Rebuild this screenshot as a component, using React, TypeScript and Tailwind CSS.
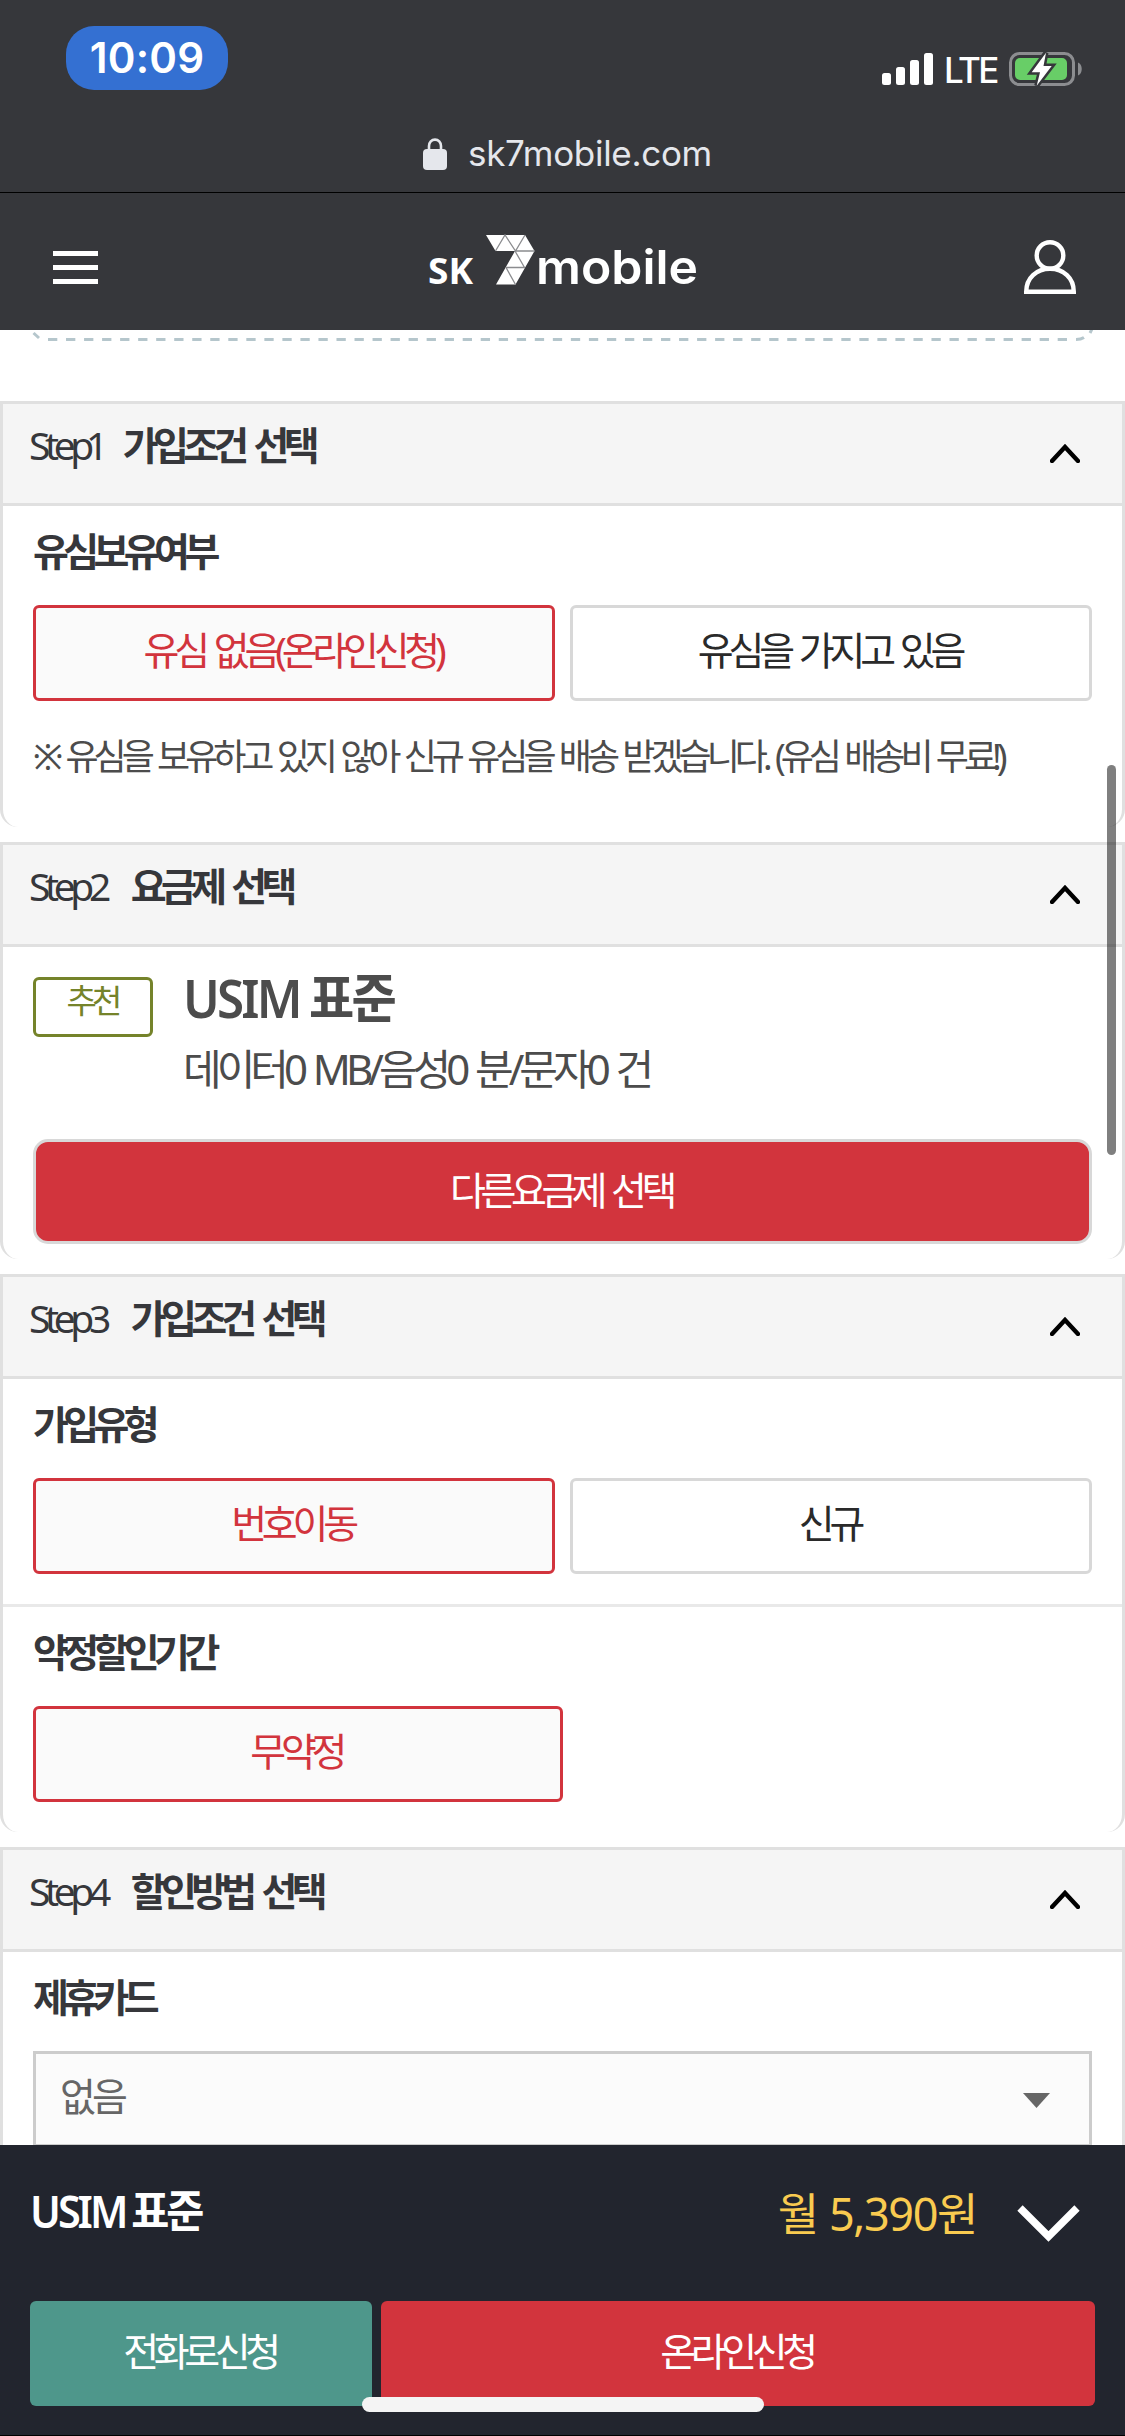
import { useState, type ReactNode } from 'react'

interface StepSectionProps {
  step: number
  title: string
  className?: string
  children: ReactNode
}

interface OptionButtonProps {
  label: string
  selected: boolean
  onClick: () => void
  className?: string
}

function StatusBar() {
  return (
    <div className="flex h-[116px] items-start justify-between pl-[66px] pr-[42px] font-['Inter',sans-serif] text-white">
      <div className="mt-[26px] flex h-16 w-[162px] items-center justify-center rounded-[28px] bg-[#3470d2]">
        <span className="text-[42px] font-semibold leading-none tracking-[0.2px]">10:09</span>
      </div>
      <div className="mt-[52px] flex items-start">
        <svg width="51" height="34" viewBox="0 0 51 34" fill="#fff">
          <rect x="0" y="21" width="9" height="12" rx="2.5" />
          <rect x="14" y="15" width="9" height="18" rx="2.5" />
          <rect x="28" y="8" width="9" height="25" rx="2.5" />
          <rect x="42" y="1" width="9" height="32" rx="2.5" />
        </svg>
        <span className="ml-[11px] w-[52px] text-[35px] font-medium leading-[36px] tracking-[-2.5px]">LTE</span>
        <svg className="ml-[13px]" width="74" height="34" viewBox="0 0 74 34">
          <rect x="1.5" y="1.5" width="63" height="31" rx="9" fill="none" stroke="#8c8d90" strokeWidth="3" />
          <rect x="6" y="6" width="52" height="22" rx="5" fill="#68ce67" />
          <path d="M69 10.5c5 2 5 11 0 13z" fill="#8c8d90" />
          <path
            d="M37 .7 22.7 20.300H31L27.700 33.700 42.700 14h-8.200z"
            fill="#fff"
            stroke="#36373b"
            strokeWidth="5"
            strokeLinejoin="miter"
            paintOrder="stroke"
          />
        </svg>
      </div>
    </div>
  )
}

function AddressBar() {
  return (
    <div className="flex h-[76px] items-center justify-center pl-[10px] font-['Inter',sans-serif] text-[#e5e7ec]">
      <svg className="-mt-[1px]" width="24" height="32" viewBox="0 0 24 32">
        <path d="M6 13V8a6 6.4 0 0 1 12 0v5" fill="none" stroke="currentColor" strokeWidth="2.6" />
        <rect x="0" y="11" width="24" height="21" rx="4" fill="currentColor" />
      </svg>
      <span className="-mt-[1px] ml-[21px] text-[35px] leading-none tracking-[-0.3px]">sk7mobile.com</span>
    </div>
  )
}

function Logo() {
  return (
    <svg className="overflow-visible" width="272" height="54" viewBox="0 0 272 54" fill="#fff">
      <text x="0" y="50" fontFamily="'Noto Sans', sans-serif" fontWeight="700" fontSize="35" textLength="45" lengthAdjust="spacingAndGlyphs">
        SK
      </text>
      <path d="M58 1h39l9.500 16-19 33.500H68L87 17H67.500z" />
      <path d="M67.500 17 77 1l10.500 16L97 1M87 17h19.500M87 17l9.500 16.500M78 33.500h19M78 33.500l9.500 17" fill="none" stroke="#8b8c8f" strokeWidth="1.300" />
      <text x="108" y="50" fontFamily="'Inter', sans-serif" fontWeight="600" fontSize="47" textLength="162" lengthAdjust="spacingAndGlyphs">
        mobile
      </text>
    </svg>
  )
}

function SiteHeader() {
  return (
    <header className="flex h-[138px] items-start justify-between border-t border-black pl-[53px] pr-[49px]">
      <button aria-label="메뉴" className="mt-[58px] flex w-[45px] flex-col gap-[9px]">
        <span className="h-[5px] bg-white" />
        <span className="h-[5px] bg-white" />
        <span className="h-[5px] bg-white" />
      </button>
      <div className="ml-[6px] mt-[41px] w-[272px]">
        <Logo />
      </div>
      <button aria-label="마이페이지" className="mt-[47px]">
        <svg width="52" height="54" viewBox="0 0 52 54" fill="none" stroke="#fff" strokeWidth="4.400">
          <ellipse cx="26" cy="15.500" rx="13.300" ry="13.300" />
          <path d="M2.200 51.800h47.600C49.800 38 39.500 28.800 26 28.800S2.200 38 2.200 51.800z" />
        </svg>
      </button>
    </header>
  )
}

function StepSection({ step, title, className = '', children }: StepSectionProps) {
  const [isOpen, setIsOpen] = useState(true)

  return (
    <section className={`rounded-b-[18px] border-x-[3px] border-[#e0e0e0] ${className}`}>
      <button
        onClick={() => setIsOpen(!isOpen)}
        className="flex h-[105px] w-full items-start justify-between border-y-[3px] border-[#e0e0e0] bg-[#f5f5f5] pl-[26px] pr-[42px] text-left text-[#36373b]"
      >
        <span className="flex gap-[25px] leading-[82px]">
          <span>
            Step<span className={step === 1 ? '-ml-[3px] -mr-[5px]' : ''}>{step}</span>
          </span>
          <strong className="font-bold tracking-[-5.700px] [word-spacing:5.500px]">{title}</strong>
        </span>
        <svg className="mt-[39px]" width="30" height="20" viewBox="0 0 30 20" fill="none" stroke="#000" strokeWidth="4.400">
          <path d="M2 18 15 4l13 14" strokeLinecap="round" />
        </svg>
      </button>
      {isOpen && children}
    </section>
  )
}

function FieldLabel({ children }: { children: ReactNode }) {
  return <h3 className="mb-[24px] pt-[15px] font-bold leading-[60px] tracking-[-5.600px] text-[#36373b]">{children}</h3>
}

function OptionButton({ label, selected, onClick, className = 'flex-1' }: OptionButtonProps) {
  const color = selected ? 'border-[#d2343d] bg-[#fafafa] text-[#d2343d]' : 'border-[#d8d8d8] bg-white text-[#2a2a2a]'

  return (
    <button
      onClick={onClick}
      className={`flex h-24 items-center justify-center rounded-[6px] border-[3px] pb-[6px] pr-[3px] tracking-[-5.200px] [word-spacing:4px] ${color} ${className}`}
    >
      {label}
    </button>
  )
}

function PlanSummary() {
  return (
    <div className="px-[30px] pt-[30px]">
      <div className="flex h-[162px] items-start">
        <span className="flex h-[60px] w-[120px] items-center justify-center rounded-[6px] border-[3px] border-[#75832a] pb-[12px] pr-[2px] text-[33px] tracking-[-4.800px] text-[#75832a]">
          추천
        </span>
        <div className="ml-[30px] text-[#4c4c4c]">
          <p className="-mt-[14px] origin-left scale-x-[0.93] text-[53px] font-semibold leading-[70px] tracking-[-3px] [word-spacing:-1px]">
            USIM 표준
          </p>
          <p className="text-[42px] leading-[72px] tracking-[-5px] [word-spacing:4px]">데이터0 MB/음성0 분/문자0 건</p>
        </div>
      </div>
      <button className="flex h-[105px] w-full items-center justify-center rounded-[15px] border-[3px] border-[#d8d8d8] bg-[#d2343d] pb-[3px] pr-[3px] text-white [word-spacing:4px]">
        다른요금제 선택
      </button>
    </div>
  )
}

function BottomBar() {
  return (
    <footer className="absolute inset-x-0 bottom-0 h-[291px] border-b border-black bg-[#22252e] px-[30px] text-white">
      <div className="flex h-[156px] items-start">
        <strong className="mt-[26px] origin-left scale-x-[0.92] text-[45px] font-semibold leading-[80px] tracking-[-3.300px] [word-spacing:-2px]">
          USIM 표준
        </strong>
        <span className="ml-auto mt-[29px] text-[45px] leading-[80px] tracking-[-1.400px] text-[#f9cb50] [word-spacing:1px]">월 5,390원</span>
        <svg className="ml-[40px] mr-[15px] mt-[59px]" width="63" height="38" viewBox="0 0 63 38" fill="none" stroke="#fff" strokeWidth="7.500">
          <path d="M3 4l28.500 28.500L60 4" />
        </svg>
      </div>
      <div className="flex gap-[9px]">
        <button className="h-[105px] w-[342px] rounded-[6px] bg-[#4e978b] pb-[5px] pr-[3px]">전화로신청</button>
        <button className="h-[105px] flex-1 rounded-[6px] bg-[#d2343d] pb-[5px] pr-[3px]">온라인신청</button>
      </div>
      <div className="absolute bottom-[23px] left-[362px] h-[15px] w-[402px] rounded-full bg-[#f4f4f4]" />
    </footer>
  )
}

export default function App() {
  const [usim, setUsim] = useState('none')
  const [joinType, setJoinType] = useState('move')

  return (
    <div className="relative h-[2436px] w-[1125px] overflow-hidden bg-white font-['Noto_Sans','Noto_Sans_CJK_KR',sans-serif] text-[39px] tracking-[-5.400px]">
      <div className="bg-[#36373b] tracking-normal">
        <StatusBar />
        <AddressBar />
        <SiteHeader />
      </div>

      <svg className="block" width="1125" height="71" viewBox="0 0 1125 71" fill="none" stroke="#b5c6cc" strokeWidth="3">
        <path d="M33.500 3l5.500 5" />
        <path d="M48 9.500h1025" strokeDasharray="9.300 8.730" />
        <path d="M1076 9.500q5 0 8-2M1090 3l2-4" />
      </svg>

      <StepSection step={1} title="가입조건 선택" className="h-[426px]">
        <div className="px-[30px]">
          <FieldLabel>유심보유여부</FieldLabel>
          <div className="flex gap-[15px]">
            <OptionButton label="유심 없음(온라인신청)" selected={usim === 'none'} onClick={() => setUsim('none')} />
            <OptionButton label="유심을 가지고 있음" selected={usim === 'have'} onClick={() => setUsim('have')} />
          </div>
          <p className="mt-[26px] whitespace-nowrap text-[36px] leading-[60px] tracking-[-5px] text-[#4c4c4c] [word-spacing:2.900px]">
            ※ 유심을 보유하고 있지 않아 신규 유심을 배송 받겠습니다. (유심 배송비 무료!)
          </p>
        </div>
      </StepSection>

      <StepSection step={2} title="요금제 선택" className="mt-[15px] h-[417px]">
        <PlanSummary />
      </StepSection>

      <StepSection step={3} title="가입조건 선택" className="mt-[15px] h-[558px]">
        <div className="border-b-[3px] border-[#e9e9e9] px-[30px] pb-[30px]">
          <FieldLabel>가입유형</FieldLabel>
          <div className="flex gap-[15px]">
            <OptionButton label="번호이동" selected={joinType === 'move'} onClick={() => setJoinType('move')} />
            <OptionButton label="신규" selected={joinType === 'new'} onClick={() => setJoinType('new')} />
          </div>
        </div>
        <div className="px-[30px]">
          <FieldLabel>약정할인기간</FieldLabel>
          <OptionButton label="무약정" selected onClick={() => {}} className="w-1/2" />
        </div>
      </StepSection>

      <StepSection step={4} title="할인방법 선택" className="mt-[15px] h-[420px]">
        <div className="px-[30px]">
          <FieldLabel>제휴카드</FieldLabel>
          <div className="flex h-24 items-center justify-between border-[3px] border-[#ccc] bg-[#fbfbfb] pl-[24px] pr-[39px] text-[#666]">
            <span className="pb-[5px] tracking-[-4px]">없음</span>
            <svg className="mt-[3px]" width="27" height="16" viewBox="0 0 27 16" fill="#666">
              <path d="M0 0h27L13.500 15z" />
            </svg>
          </div>
        </div>
      </StepSection>

      <div className="absolute left-[1107px] top-[765px] h-[390px] w-[9px] rounded-full bg-black/50" />
      <BottomBar />
    </div>
  )
}
